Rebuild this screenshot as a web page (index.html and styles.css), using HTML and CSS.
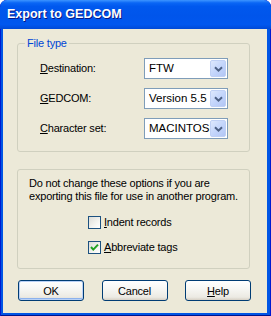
FILE: index.html
```html
<!doctype html>
<html lang="en">
	<head>
		<meta charset="utf-8">
		<title>Export to GEDCOM</title>
		<link rel="stylesheet" href="styles.css">
	</head>
	<body>
		<div class="window">
			<div class="titlebar">
				<span class="title">Export to GEDCOM</span>
			</div>

			<div class="client">
				<fieldset class="group group-type">
					<legend>File type</legend>
					<div class="field-grid">
						<label class="field-label"><u>D</u>estination:</label>
						<div class="combo">
							<span class="combo-value">FTW</span>
							<span class="combo-btn"><svg width="9" height="6" viewBox="0 0 9 6"><path d="M1 1.2 L4.5 4.6 L8 1.2" fill="none" stroke="#4d6185" stroke-width="2"/></svg></span>
						</div>

						<label class="field-label"><u>G</u>EDCOM:</label>
						<div class="combo">
							<span class="combo-value">Version 5.5</span>
							<span class="combo-btn"><svg width="9" height="6" viewBox="0 0 9 6"><path d="M1 1.2 L4.5 4.6 L8 1.2" fill="none" stroke="#4d6185" stroke-width="2"/></svg></span>
						</div>

						<label class="field-label"><u>C</u>haracter set:</label>
						<div class="combo">
							<span class="combo-value">MACINTOSH</span>
							<span class="combo-btn"><svg width="9" height="6" viewBox="0 0 9 6"><path d="M1 1.2 L4.5 4.6 L8 1.2" fill="none" stroke="#4d6185" stroke-width="2"/></svg></span>
						</div>
					</div>
				</fieldset>

				<fieldset class="group group-options">
					<p class="note">Do not change these options if you are<br>exporting this file for use in another program.</p>
					<div class="checks">
						<label class="check">
							<span class="check-box"></span>
							<span><u>I</u>ndent records</span>
						</label>
						<label class="check">
							<span class="check-box"><svg width="11" height="11" viewBox="0 0 11 11"><path d="M2 5 L4.3 7.6 L9 2.6" fill="none" stroke="#21a121" stroke-width="2"/></svg></span>
							<span><u>A</u>bbreviate tags</span>
						</label>
					</div>
				</fieldset>

				<div class="buttons">
					<button class="btn btn-default">OK</button>
					<button class="btn">Cancel</button>
					<button class="btn"><u>H</u>elp</button>
				</div>
			</div>
		</div>
	</body>
</html>
```

FILE: styles.css
```css
* { box-sizing: border-box; }

html,
body {
	margin: 0;
	padding: 0;
	background: #fff;
}

/* Window frame */
.window {
	width: 271px;
	height: 316px;
	display: flex;
	flex-direction: column;
	background: #0055e5;
	border-radius: 7px 7px 0 0;
	box-shadow: inset 1px 0 #0019cf, inset -1px 0 #0019cf, inset 0 -1px #00138c;
	overflow: hidden;
}

.titlebar {
	height: 29px;
	flex: none;
	display: flex;
	align-items: center;
	padding-left: 7px;
	padding-bottom: 1px;
	background: linear-gradient(to bottom, #3d95ff 0%, #0a66f5 10%, #0058ee 22%, #0055eb 55%, #0057ef 85%, #0049d6 100%);
	border-radius: 7px 7px 0 0;
}
.title {
	font-family: "Liberation Sans", Arial, sans-serif;
	font-weight: bold;
	font-size: 12.5px;
	color: #fff;
	text-shadow: 1px 1px #0a1883;
}

.client {
	flex: 1;
	margin: 0 4px 3px 3px;
	padding: 0 17px 0 14px;
	background: #ece9d8;
	font-family: "Liberation Sans", Arial, sans-serif;
	font-size: 11px;
	line-height: 13px;
	letter-spacing: -0.2px;
	color: #000;
}

/* Group boxes */
.group {
	margin: 0;
	border: 1px solid #d0d0bf;
	border-radius: 3px;
	min-width: 0;
}
.group legend {
	padding: 0 2px;
	color: #0046d5;
}
.group-type {
	margin-top: 8px;
	padding: 8px 0 12px 7px;
}
.group-options {
	margin-top: 17px;
	padding: 7px 0 14px 11px;
}

.field-grid {
	margin-left: 15px;
	display: grid;
	grid-template-columns: 104px 84px;
	row-gap: 9px;
	align-items: center;
}

/* Combo boxes */
.combo {
	height: 21px;
	display: flex;
	align-items: center;
	background: #fff;
	border: 1px solid #7f9db9;
	padding: 1px;
}
.combo-value {
	flex: 1;
	min-width: 0;
	padding-left: 3px;
	white-space: nowrap;
	overflow: hidden;
	font-size: 11.5px;
	letter-spacing: 0;
}
.combo-btn {
	width: 16px;
	height: 17px;
	flex: none;
	display: flex;
	align-items: center;
	justify-content: center;
	background: linear-gradient(135deg, #dde8fd 0%, #c2d4fb 55%, #b2c6f5 100%);
	border: 1px solid #bfd0f5;
	border-radius: 2px;
}

.note {
	margin: 0;
}

/* Check boxes */
.checks {
	margin: 13px 0 0 59px;
	display: flex;
	flex-direction: column;
	gap: 12px;
}
.check {
	display: flex;
	align-items: center;
	gap: 3px;
	height: 13px;
}
.check-box {
	width: 13px;
	height: 13px;
	display: flex;
	align-items: center;
	justify-content: center;
	border: 1px solid #1c5180;
	background: linear-gradient(135deg, #dcdcd7 0%, #f4f4f0 60%, #fff 100%);
}

/* Push buttons */
.buttons {
	display: flex;
	justify-content: space-between;
	margin: 11px -1px 0 1px;
}
.btn {
	width: 66px;
	height: 21px;
	padding: 0;
	font-family: inherit;
	font-size: 11px;
	letter-spacing: -0.2px;
	color: #000;
	border: 1px solid #003c74;
	border-radius: 3px;
	background: linear-gradient(to bottom, #fff 0%, #f7f7f4 40%, #eceae3 85%, #d6d0c5 100%);
}
.btn-default {
	box-shadow: inset 0 0 0 1px #b9d1f6, inset 0 -2px 0 0 #8db2ed;
}
```
